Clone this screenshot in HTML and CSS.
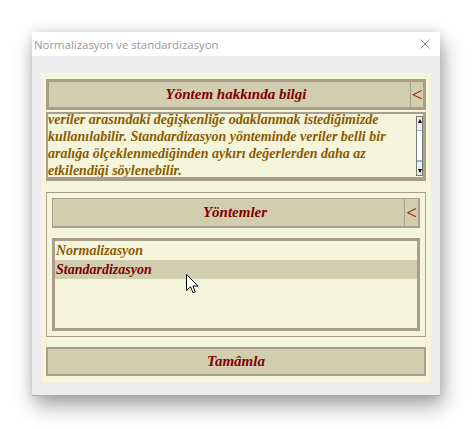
FILE: index.html
```html
<!DOCTYPE html>
<html>
<head>
<meta charset="utf-8">
<title>Normalizasyon ve standardizasyon</title>
<link rel="stylesheet" href="styles.css">
</head>
<body>
<div class="window">
  <div class="titlebar">
    <span class="title">Normalizasyon ve standardizasyon</span>
    <svg class="close" width="10" height="10" viewBox="0 0 10 10"><path d="M0.5 0.5 L9.5 9.5 M9.5 0.5 L0.5 9.5" stroke="#8a8a8a" stroke-width="1" fill="none"/></svg>
  </div>
  <div class="client">
    <div class="panel">
      <div class="hdr hdr-main">
        <span class="hdr-text">Yöntem hakkında bilgi</span>
        <span class="toggle">&lt;</span>
      </div>
      <div class="textbox">
        <div class="textview">
          <div class="textcontent">
            <div class="line">veriler arasındaki değişkenliğe odaklanmak istediğimizde</div>
            <div class="line">kullanılabilir. Standardizasyon yönteminde veriler belli bir</div>
            <div class="line">aralığa ölçeklenmediğinden aykırı değerlerden daha az</div>
            <div class="line">etkilendiği söylenebilir.</div>
          </div>
        </div>
        <div class="scrollbar">
          <div class="sb-arrow"><span class="tri tri-up"></span></div>
          <div class="sb-track"><div class="sb-thumb"></div></div>
          <div class="sb-arrow"><span class="tri tri-down"></span></div>
        </div>
      </div>
      <div class="group">
        <div class="hdr hdr-sub">
          <span class="hdr-text">Yöntemler</span>
          <span class="toggle toggle-sub">&lt;</span>
        </div>
        <div class="listbox">
          <div class="item">Normalizasyon</div>
          <div class="item selected">Standardizasyon</div>
        </div>
      </div>
      <div class="button">Tamâmla</div>
    </div>
  </div>
  <div class="strip"></div>
  <svg class="cursor" width="13" height="20" viewBox="0 0 13 20"><path d="M0.5 0.5 L0.5 16.5 L4.5 12.8 L7 18.7 L9.3 17.8 L6.9 12 L12 12 Z" fill="#fff" stroke="#000" stroke-width="1" stroke-linejoin="miter"/></svg>
</div>
</body>
</html>
```

FILE: styles.css
```css
html, body {
  margin: 0;
  padding: 0;
  background: #ffffff;
}
body {
  width: 472px;
  height: 429px;
  overflow: hidden;
}
.window {
  position: relative;
  margin: 32px 0 0 32px;
  width: 408px;
  background: #ececec;
  box-shadow: 3px 10px 20px rgba(0,0,0,0.35), 0 0 10px rgba(0,0,0,0.12);
}
.titlebar {
  height: 24px;
  background: #ffffff;
  display: flex;
  align-items: center;
  justify-content: space-between;
  padding: 0 10px 0 2px;
}
.title {
  font-family: "Open Sans", "Noto Sans", sans-serif;
  font-size: 11.4px;
  color: #999999;
}
.close { display: block; }
.client {
  padding: 17px 9px 12px 9px;
}
.panel {
  background: #f5f5dc;
  padding: 6px 5px 7px 5px;
  display: flex;
  flex-direction: column;
}
.hdr {
  display: flex;
  align-items: stretch;
  background: #d0ceae;
  border-style: solid;
  border-color: #a99d8b;
  box-sizing: border-box;
}
.hdr-main {
  height: 31px;
  border-width: 3px;
}
.hdr-text {
  flex: 1;
  display: flex;
  align-items: center;
  justify-content: center;
  padding-left: 13px;
  font-family: "Liberation Serif", serif;
  font-weight: bold;
  font-style: italic;
  font-size: 15px;
  color: #800000;
}
.toggle {
  width: 12px;
  border-left: 1px solid #a99d8b;
  display: flex;
  align-items: center;
  justify-content: center;
  font-family: "Liberation Serif", serif;
  font-size: 19px;
  color: #9b0000;
  line-height: 1;
  padding-bottom: 1px;
}
.textbox {
  margin-top: 2px;
  height: 69px;
  box-sizing: border-box;
  border: 2px solid #a99d8b;
  border-right-width: 3px;
  border-bottom-width: 4px;
  display: flex;
}
.textview {
  flex: 1;
  overflow: hidden;
}
.textcontent {
  margin-top: -3px;
}
.line {
  font-family: "Liberation Serif", serif;
  font-weight: bold;
  font-style: italic;
  font-size: 14px;
  line-height: 17px;
  color: #8b5a00;
  white-space: nowrap;
}
.scrollbar {
  width: 7px;
  margin: 2px 0 1px 0;
  background: #f0f0f0;
  border: 1px solid #7a7a7a;
  box-sizing: border-box;
  display: flex;
  flex-direction: column;
}
.sb-arrow {
  height: 8px;
  display: flex;
  align-items: center;
  justify-content: center;
  background: #e8e8e8;
}
.tri {
  width: 0;
  height: 0;
  border-left: 2px solid transparent;
  border-right: 2px solid transparent;
}
.tri-up { border-bottom: 4px solid #000; }
.tri-down { border-top: 4px solid #000; }
.sb-track {
  flex: 1;
  padding: 5px 0;
  display: flex;
}
.sb-thumb {
  flex: 1;
  background: #ffffff;
  border-top: 1px solid #8fb4e6;
  border-bottom: 1px solid #8fb4e6;
  box-shadow: inset 0 -16px 0 -15px #8fb4e6;
}
.group {
  margin-top: 11px;
  border: 1px solid #a99d8b;
  padding: 5px;
  display: flex;
  flex-direction: column;
}
.hdr-sub {
  height: 30px;
  border-width: 1px 2px 2px 1px;
}
.toggle-sub {
  width: 13px;
}
.listbox {
  margin-top: 10px;
  height: 93px;
  box-sizing: border-box;
  border: 3px solid #a99d8b;
}
.item {
  height: 19px;
  line-height: 19px;
  padding-left: 1px;
  font-family: "Liberation Serif", serif;
  font-weight: bold;
  font-style: italic;
  font-size: 14px;
  color: #8b5a00;
}
.item.selected {
  background: #d0ceae;
  color: #800000;
}
.button {
  margin-top: 10px;
  height: 29px;
  box-sizing: border-box;
  border: 2px solid #a99d8b;
  background: #d0ceae;
  display: flex;
  align-items: center;
  justify-content: center;
  font-family: "Liberation Serif", serif;
  font-weight: bold;
  font-style: italic;
  font-size: 15px;
  color: #800000;
}
.strip {
  height: 1px;
  background: #b9ad98;
}
.cursor {
  position: absolute;
  left: 154px;
  top: 242px;
}
```
